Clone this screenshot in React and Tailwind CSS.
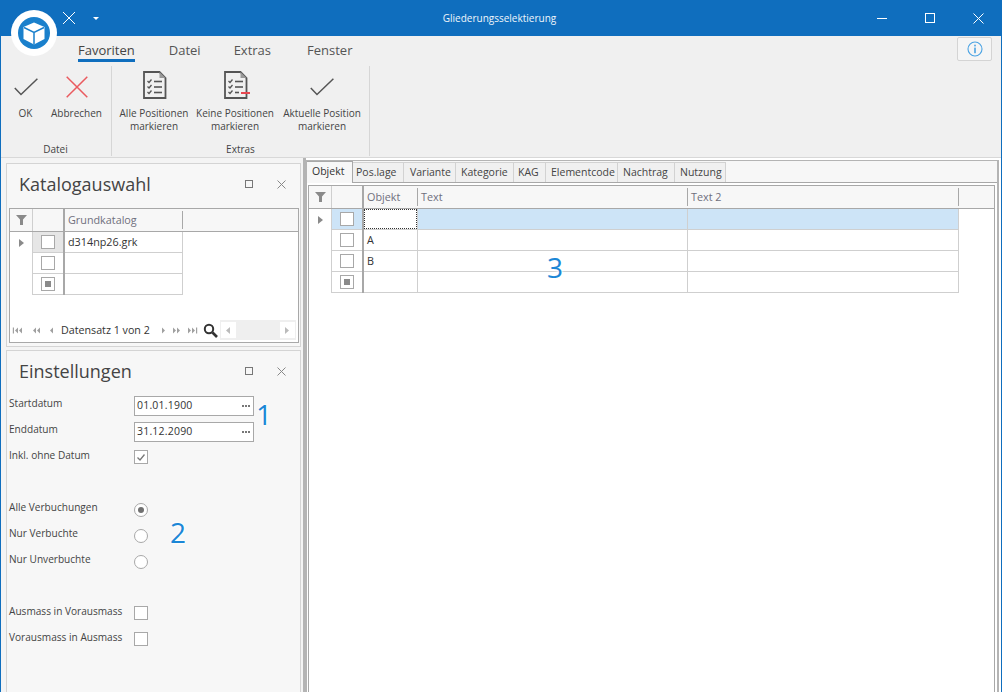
import React from "react";

const Check = () => (
  <svg width="24" height="18" viewBox="0 0 24 18" fill="none">
    <path d="M0.8 10 L7 16.5 L23.4 0.8" stroke="#555" strokeWidth="1.5" />
  </svg>
);

const DocIcon = ({ none }) => (
  <svg width="26" height="28" viewBox="0 0 26 28" fill="none" className="ml-[3px] -mt-[4px]">
    <path d="M1 1 H16.5 L22.5 7 V27 H1 Z" stroke="#555" strokeWidth="1.8" />
    <path d="M16.5 1 V7 H22.5 Z" fill="#999" />
    <path d="M4.5 10 l1.5 1.5 l2.5 -3" stroke="#555" strokeWidth="1.3" />
    <path d="M4.5 15.5 l1.5 1.5 l2.5 -3" stroke="#555" strokeWidth="1.3" />
    <path d="M4.5 21 l1.5 1.5 l2.5 -3" stroke="#555" strokeWidth="1.3" />
    <path d="M11 10.5 H19" stroke="#555" strokeWidth="1.6" />
    <path d="M11 16 H19" stroke="#555" strokeWidth="1.6" />
    {none ? (
      <path d="M11 21.5 H15" stroke="#555" strokeWidth="1.6" />
    ) : (
      <path d="M11 21.5 H19" stroke="#555" strokeWidth="1.6" />
    )}
    {none && <path d="M17 22 H26" stroke="#e8474f" strokeWidth="2" />}
  </svg>
);

const RibbonBtn = ({ icon, lines, w }) => (
  <div className={`flex flex-col items-center ${w}`}>
    <div className="h-[36px] pt-[5px] flex items-center justify-center">{icon}</div>
    <div className="mt-[5px] text-[10px] leading-[13px] text-[#444] text-center whitespace-nowrap">
      {lines.map((l) => (
        <div key={l}>{l}</div>
      ))}
    </div>
  </div>
);

const Tri = () => (
  <svg width="5" height="8" viewBox="0 0 5 8">
    <path d="M0 0 L5 4 L0 8 Z" fill="#8a8a8a" />
  </svg>
);

const Funnel = () => (
  <svg width="11" height="10" viewBox="0 0 11 10">
    <path d="M0 0 H11 L7 4.5 V10 H4 V4.5 Z" fill="#8a8a8a" />
  </svg>
);

const Box = ({ mode }) => (
  <div className="w-[14px] h-[14px] border border-[#a8a8a8] bg-white flex items-center justify-center">
    {mode === "mid" && <div className="w-[6px] h-[6px] bg-[#8a8a8a]" />}
    {mode === "check" && (
      <svg width="10" height="9" viewBox="0 0 10 9" fill="none">
        <path d="M1.5 4.5 L4 7 L8.5 1.5" stroke="#777" strokeWidth="1.3" />
      </svg>
    )}
  </div>
);

const Radio = ({ on }) => (
  <div className="w-[14px] h-[14px] rounded-full border border-[#a8a8a8] bg-white flex items-center justify-center">
    {on && <div className="w-[6px] h-[6px] rounded-full bg-[#707070]" />}
  </div>
);

const PanelHead = ({ title }) => (
  <div className="h-[44px] flex items-center shrink-0 pl-[12px] pr-[14px] pb-[4px]">
    <div className="flex-1 text-[18px] text-[#444] leading-none">{title}</div>
    <div className="w-[8px] h-[8px] border border-[#777] mr-[24px]" />
    <svg width="9" height="9" viewBox="0 0 9 9" fill="none">
      <path d="M0.5 0.5 L8.5 8.5 M8.5 0.5 L0.5 8.5" stroke="#888" strokeWidth="1" />
    </svg>
  </div>
);

const Row = ({ cols, selected, indicator, mode, shaded }) => (
  <div className="flex h-[21px] shrink-0">
    <div className="w-[22px] flex items-center justify-center shrink-0">{indicator && <Tri />}</div>
    <div
      className={`w-[31px] shrink-0 flex items-center justify-center border-l border-b border-[#cfcfcf] ${
        shaded ? "bg-[#e6e6e6]" : selected ? "bg-[#cde4f7]" : "bg-white"
      }`}
    >
      <Box mode={mode} />
    </div>
    <div className="w-[2px] shrink-0 bg-[#a8a8a8]" />
    {cols.map((c, i) => (
      <div
        key={i}
        style={{ width: c.w }}
        className={`shrink-0 border-b border-r border-[#cfcfcf] pl-[3px] flex items-center text-[10.8px] text-[#333] relative ${
          selected ? (c.focus ? "bg-white" : "bg-[#cde4f7]") : "bg-white"
        }`}
      >
        {c.focus && <div className="absolute inset-0 border border-dotted border-[#333]" />}
        {c.t}
      </div>
    ))}
  </div>
);

const HeadRow = ({ cols }) => (
  <div className="flex h-[23px] bg-[#f7f7f7] border-b border-[#a8a8a8] shrink-0">
    <div className="w-[22px] flex items-center justify-center shrink-0">
      <Funnel />
    </div>
    <div className="w-[31px] shrink-0 border-l border-[#cfcfcf]" />
    <div className="w-[2px] shrink-0 bg-[#a8a8a8]" />
    {cols.map((c) => (
      <div key={c.t} style={{ width: c.w }} className="shrink-0 flex items-center pl-[3px] text-[10.8px] text-[#6f6f7d] relative">
        {c.t}
        <div className="absolute right-0 top-[2px] bottom-[2px] w-[1px] bg-[#a8a8a8]" />
      </div>
    ))}
  </div>
);

const NavTri = ({ dir = 1, n = 1, bar }) => (
  <svg width="12" height="7" viewBox="0 0 12 7">
    <g fill="#a0a0a0" transform={dir < 0 ? "translate(12,0) scale(-1,1)" : ""}>
      {n > 1 && <path d="M1 0.5 L4 3.5 L1 6.5 Z" />}
      <path d="M5 0.5 L8 3.5 L5 6.5 Z" />
      {bar && <rect x="9" y="0.5" width="1.2" height="6" />}
    </g>
  </svg>
);

const tabs = [
  { t: "Pos.lage", w: 51, p: 3 },
  { t: "Variante", w: 52, p: 6 },
  { t: "Kategorie", w: 58, p: 5 },
  { t: "KAG", w: 32, p: 4 },
  { t: "Elementcode", w: 72, p: 5 },
  { t: "Nachtrag", w: 57, p: 5 },
  { t: "Nutzung", w: 51, p: 5 },
];

const FormLabel = ({ children }) => (
  <div className="w-[125px] shrink-0 pt-[1px] text-[10.1px] text-[#444] leading-[13px] whitespace-nowrap">{children}</div>
);

const DateField = ({ v }) => (
  <div className="w-[120px] h-[20px] border border-[#a8a8a8] bg-white flex items-center pl-[2px] pr-[3px] text-[10.5px] text-[#333] tracking-[0.2px]">
    <span className="flex-1">{v}</span>
    <span className="flex gap-[1px]">
      <i className="w-[2px] h-[2px] bg-[#777]" />
      <i className="w-[2px] h-[2px] bg-[#777]" />
      <i className="w-[2px] h-[2px] bg-[#777]" />
    </span>
  </div>
);

const Big = ({ children, className = "" }) => (
  <span
    className={`absolute text-[28px] leading-none text-[#1c87d6] font-medium ${className}`}
    style={{ textShadow: "0 0 3px #fff, 0 0 3px #fff, 0 0 3px #fff" }}
  >
    {children}
  </span>
);

export default function App() {
  return (
    <div
      className="relative w-[1002px] h-[692px] overflow-hidden bg-[#f0f0f0] flex flex-col border-l border-r border-[#0f6ebe]"
      style={{ fontFamily: '"Open Sans", "Noto Sans", sans-serif' }}
    >
      {/* title bar */}
      <div className="h-[36px] bg-[#0f6ebe] shrink-0 flex items-center text-white relative -mx-[1px]">
        <div className="absolute left-[62px] top-[11px]">
          <svg width="14" height="14" viewBox="0 0 14 14" fill="none">
            <path d="M1 1 L13 13 M13 1 L1 13" stroke="#fff" strokeWidth="1" />
          </svg>
        </div>
        <div className="absolute left-[93px] top-[17px] w-0 h-0 border-l-[3px] border-r-[3px] border-t-[3px] border-l-transparent border-r-transparent border-t-white" />
        <div className="flex-1 text-center text-[10px] pr-[3px] text-[#f0f6fb]">Gliederungsselektierung</div>
        <div className="absolute left-[877px] top-[18px] w-[10px] h-[1px] bg-white" />
        <div className="absolute left-[925px] top-[13px] w-[10px] h-[10px] border border-white" />
        <div className="absolute left-[973px] top-[13px]">
          <svg width="11" height="11" viewBox="0 0 11 11" fill="none">
            <path d="M0.5 0.5 L10.5 10.5 M10.5 0.5 L0.5 10.5" stroke="#fff" strokeWidth="1" />
          </svg>
        </div>
      </div>

      {/* logo */}
      <div className="absolute left-[10px] top-[10px] w-[46px] h-[46px] rounded-full bg-white flex items-center justify-center z-10">
        <div className="w-[32px] h-[32px] rounded-full bg-[#1a80cc] flex items-center justify-center">
          <svg width="22" height="23" viewBox="0 0 22 23" fill="none">
            <path d="M11 0.5 L21.5 5 V17 L11 22.5 L0.5 17 V5 Z" fill="#fff" />
            <path d="M1 5.5 L11 10.5 L21 5.5 M11 10.5 V22.5" stroke="#1a80cc" strokeWidth="1.5" />
          </svg>
        </div>
      </div>

      {/* menu */}
      <div className="h-[30px] shrink-0 flex items-start pl-[77px] text-[13px] text-[#555] relative">
        <div className="pt-[5px] h-[26px] border-b-[3px] border-[#0f6ebe] leading-[18px] text-[#444]">Favoriten</div>
        <div className="pt-[5px] leading-[18px] ml-[34px]">Datei</div>
        <div className="pt-[5px] leading-[18px] ml-[33px]">Extras</div>
        <div className="pt-[5px] leading-[18px] ml-[36px]">Fenster</div>
        <div className="absolute left-[956px] top-[1px] w-[35px] h-[24px] border border-[#d4d4d4] bg-[#f5f5f5] rounded-[2px] flex items-center justify-center">
          <svg width="16" height="16" viewBox="0 0 16 16" fill="none">
            <circle cx="8" cy="8" r="7" stroke="#4ba3e3" strokeWidth="1.1" />
            <rect x="7.2" y="3.7" width="1.6" height="1.7" fill="#4ba3e3" />
            <rect x="7.2" y="6.6" width="1.6" height="5.6" fill="#4ba3e3" />
          </svg>
        </div>
      </div>

      {/* ribbon */}
      <div className="h-[91px] shrink-0 flex">
        <div className="w-[111px] shrink-0 h-[90px] flex flex-col border-r border-[#d6d6d6]">
          <div className="flex flex-1 pl-[1px]">
            <RibbonBtn w="w-[47px]" icon={<Check />} lines={["OK"]} />
            <RibbonBtn
              w="w-[55px]"
              icon={
                <svg width="22" height="22" viewBox="0 0 22 22" fill="none">
                  <path d="M0.7 0.7 L21.3 21.3 M21.3 0.7 L0.7 21.3" stroke="#ea5a5f" strokeWidth="1.5" />
                </svg>
              }
              lines={["Abbrechen"]}
            />
          </div>
          <div className="text-[10px] text-[#444] text-center leading-[13px] pr-[1px]">Datei</div>
        </div>
        <div className="w-[258px] shrink-0 h-[90px] flex flex-col border-r border-[#d6d6d6]">
          <div className="flex flex-1 pl-[6px]">
            <RibbonBtn w="w-[72px]" icon={<DocIcon />} lines={["Alle Positionen", "markieren"]} />
            <RibbonBtn w="w-[90px]" icon={<DocIcon none />} lines={["Keine Positionen", "markieren"]} />
            <RibbonBtn w="w-[84px]" icon={<Check />} lines={["Aktuelle Position", "markieren"]} />
          </div>
          <div className="text-[10px] text-[#444] text-center leading-[13px]">Extras</div>
        </div>
      </div>

      {/* main */}
      <div className="flex-1 min-h-0 flex border-t border-[#d8d8d8] bg-[#f7f7f7]">
        {/* left */}
        <div className="w-[305px] shrink-0 flex flex-col pl-[5px] pr-[2px] pt-[5px] gap-[3px] border-r-[3px] border-[#b4b4b4] bg-[#f4f4f4]">
          <div className="h-[184px] shrink-0 border border-[#d4d4d4] bg-[#f7f7f7] flex flex-col">
            <PanelHead title="Katalogauswahl" />
            <div className="ml-[2px] mr-[1px] h-[135px] border border-[#a8a8a8] bg-white flex flex-col relative">
              <HeadRow cols={[{ t: "Grundkatalog", w: 118 }]} />
              <Row indicator shaded cols={[{ t: "d314np26.grk", w: 118 }]} />
              <Row cols={[{ t: "", w: 118 }]} />
              <Row mode="mid" cols={[{ t: "", w: 118 }]} />
              <div className="mt-auto h-[24px] flex items-center pl-[1px]">
                <NavTri dir={-1} n={2} bar />
                <div className="w-[6px]" />
                <NavTri dir={-1} n={2} />
                <div className="w-[5px]" />
                <NavTri dir={-1} />
                <span className="text-[10.7px] text-[#333] ml-[3px] whitespace-nowrap">Datensatz 1 von 2</span>
                <div className="ml-[7px] flex gap-[3px]">
                  <NavTri />
                  <NavTri n={2} />
                  <NavTri n={2} bar />
                </div>
                <svg width="15" height="15" viewBox="0 0 15 15" fill="none" className="ml-[4px]">
                  <circle cx="6" cy="6" r="4.2" stroke="#333" strokeWidth="2" />
                  <path d="M9.5 9.5 L14 14" stroke="#333" strokeWidth="2.6" />
                </svg>
                <div className="ml-[2px] w-[76px] h-[20px] bg-[#efefef] flex justify-between items-center px-[1px]">
                  <div className="w-[15px] h-[16px] bg-white flex items-center justify-center">
                    <svg width="4" height="7" viewBox="0 0 4 7"><path d="M4 0 L0 3.5 L4 7 Z" fill="#bbb" /></svg>
                  </div>
                  <div className="w-[15px] h-[16px] bg-white flex items-center justify-center">
                    <svg width="4" height="7" viewBox="0 0 4 7"><path d="M0 0 L4 3.5 L0 7 Z" fill="#bbb" /></svg>
                  </div>
                </div>
              </div>
            </div>
          </div>

          <div className="flex-1 -mb-[6px] border border-[#d4d4d4] bg-[#f7f7f7] flex flex-col relative">
            <PanelHead title="Einstellungen" />
            <div className="pl-[2px] pt-[1px] flex flex-col">
              <div className="flex h-[26px]"><FormLabel>Startdatum</FormLabel><DateField v="01.01.1900" /></div>
              <div className="flex h-[26px]"><FormLabel>Enddatum</FormLabel><DateField v="31.12.2090" /></div>
              <div className="flex h-[26px]"><FormLabel>Inkl. ohne Datum</FormLabel><div className="pt-[2px]"><Box mode="check" /></div></div>
              <div className="h-[26px]" />
              <div className="flex h-[26px]"><FormLabel>Alle Verbuchungen</FormLabel><div className="pt-[3px]"><Radio on /></div></div>
              <div className="flex h-[26px]"><FormLabel>Nur Verbuchte</FormLabel><div className="pt-[3px]"><Radio /></div></div>
              <div className="flex h-[26px]"><FormLabel>Nur Unverbuchte</FormLabel><div className="pt-[3px]"><Radio /></div></div>
              <div className="h-[26px]" />
              <div className="flex h-[26px]"><FormLabel>Ausmass in Vorausmass</FormLabel><div className="pt-[2px]"><Box /></div></div>
              <div className="flex h-[26px]"><FormLabel>Vorausmass in Ausmass</FormLabel><div className="pt-[2px]"><Box /></div></div>
            </div>
            <Big className="left-[249px] top-[49px]">1</Big>
            <Big className="left-[163px] top-[167px]">2</Big>
          </div>
        </div>

        {/* right */}
        <div className="flex-1 min-w-0 pt-[2px] pr-[2px] flex flex-col relative bg-white">
          <div className="flex-1 -mb-[8px] border border-[#b4b4b4] border-r-[2px] flex flex-col min-h-0 bg-white">
            <div className="h-[22px] flex items-end shrink-0 border-b border-[#a8a8a8] relative bg-[#f7f7f7]">
              <div className="w-[46px] h-[22px] -mb-[1px] pl-[5px] bg-[#f7f7f7] border-r border-t border-[#a8a8a8] flex items-center text-[10.5px] text-[#333] z-10 pb-[2px]">Objekt</div>
              {tabs.map((t) => (
                <div
                  key={t.t}
                  style={{ width: t.w, paddingLeft: t.p }}
                  className="h-[20px] bg-[#f0f0f0] border-r border-t border-[#d2d2d2] flex items-center text-[10.5px] text-[#444] whitespace-nowrap"
                >
                  {t.t}
                </div>
              ))}
            </div>
            <div className="flex-1 pt-[2px] pl-[1px] pr-[2px] min-h-0">
              <div className="h-full border border-[#a8a8a8] bg-white flex flex-col">
                <HeadRow cols={[{ t: "Objekt", w: 54 }, { t: "Text", w: 270 }, { t: "Text 2", w: 271 }]} />
                <Row indicator selected cols={[{ t: "", w: 54, focus: true }, { t: "", w: 270 }, { t: "", w: 271 }]} />
                <Row cols={[{ t: "A", w: 54 }, { t: "", w: 270 }, { t: "", w: 271 }]} />
                <Row cols={[{ t: "B", w: 54 }, { t: "", w: 270 }, { t: "", w: 271 }]} />
                <Row mode="mid" cols={[{ t: "", w: 54 }, { t: "", w: 270 }, { t: "", w: 271 }]} />
              </div>
            </div>
          </div>
          <Big className="left-[241px] top-[95px]">3</Big>
        </div>
      </div>
    </div>
  );
}
